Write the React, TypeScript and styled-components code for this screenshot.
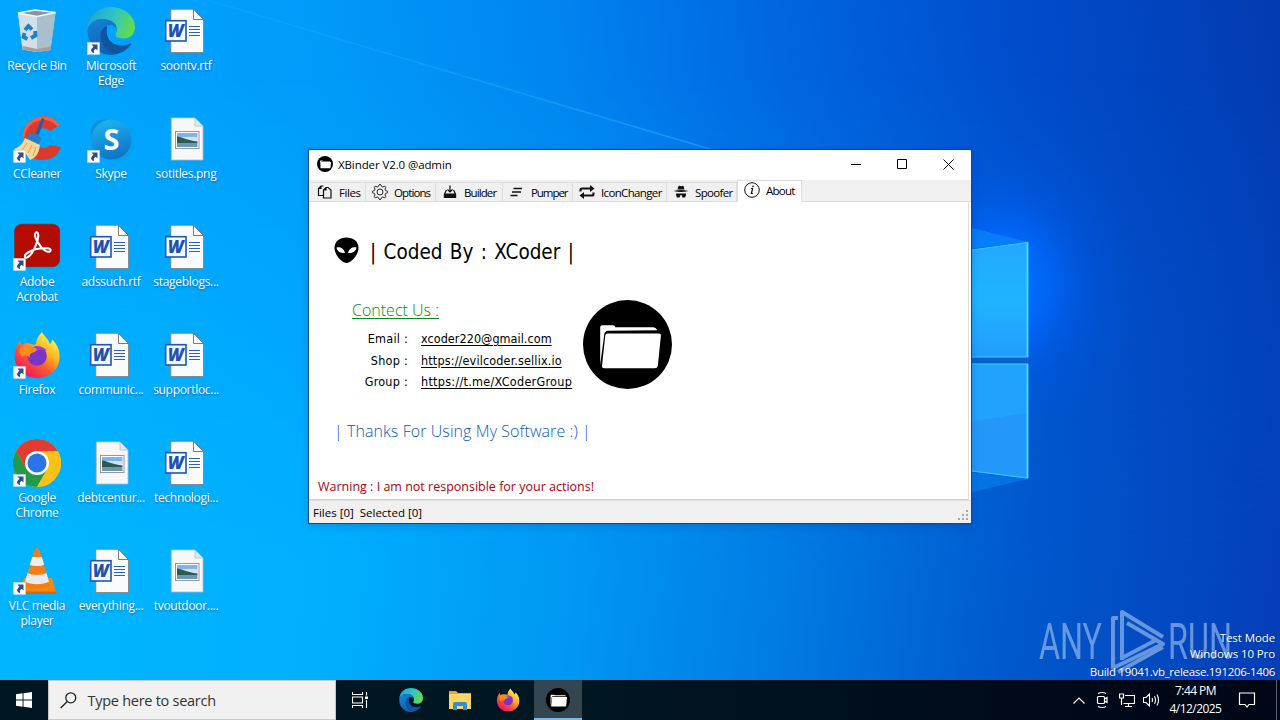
import { ReactElement, ReactNode } from 'react';
import styled, { createGlobalStyle } from 'styled-components';

const GlobalStyle = createGlobalStyle`
  * {
    box-sizing: border-box;
  }

  body {
    margin: 0;
    overflow: hidden;
  }
`;

const ui = "'Open Sans', 'Noto Sans', sans-serif";
const tahoma = "'DejaVu Sans Condensed', 'DejaVu Sans', sans-serif";

const Screen = styled.div`
  position: relative;
  display: flex;
  flex-direction: column;
  width: 1280px;
  height: 720px;
  overflow: hidden;
  font-family: ${ui};
  font-size: 12px;

  svg {
    display: block;
    flex: none;
  }
`;

const WallpaperSvg = styled.svg`
  position: absolute;
  inset: 0;
`;

const Desktop = styled.main`
  position: relative;
  flex: 1;
`;

const IconGrid = styled.div`
  display: grid;
  grid-template-columns: 74px 74px 76px;
  grid-auto-rows: 108px;
  width: 224px;
`;

const Shortcut = styled.div`
  display: flex;
  flex-direction: column;
  align-items: center;
  padding-top: 7px;
`;

const ShortcutLabel = styled.div`
  margin-top: 3px;
  color: #fff;
  font-size: 12px;
  line-height: 15px;
  text-align: center;
  letter-spacing: -0.3px;
  white-space: pre;
  text-shadow: 0 1px 2px rgba(0, 40, 90, 0.5);
`;

const Window = styled.section`
  position: absolute;
  left: 308px;
  top: 149px;
  display: flex;
  flex-direction: column;
  width: 664px;
  height: 375px;
  border: 1px solid #0c4a80;
  background: #fff;
  box-shadow: 0 2px 8px rgba(0, 30, 90, 0.2);
`;

const TitleBar = styled.header`
  display: flex;
  align-items: center;
  height: 30px;
  padding: 0 0 2px 8px;
`;

const WindowTitle = styled.span`
  flex: 1;
  margin-left: 5px;
  font-size: 11.5px;
  letter-spacing: -0.1px;
`;

const WindowButton = styled.div`
  display: flex;
  align-items: center;
  justify-content: center;
  width: 46px;
  height: 28px;
`;

const TabStrip = styled.nav`
  display: flex;
  align-items: flex-end;
  height: 22px;
  padding-left: 2px;
  background: #f0f0f0;
  box-shadow: inset 0 -1px #dcdcdc;
`;

const Tab = styled.div<{ $width: number; $active?: boolean }>`
  display: flex;
  align-items: center;
  gap: 6px;
  width: ${({ $width }) => $width}px;
  height: ${({ $active }) => ($active ? 22 : 20)}px;
  padding: ${({ $active }) => ($active ? '0 0 2px 6px' : '0 0 0 6px')};
  border: 1px solid #dcdcdc;
  border-left-width: ${({ $active }) => ($active ? 1 : 0)}px;
  border-bottom-color: ${({ $active }) => ($active ? '#fff' : '#dcdcdc')};
  background: ${({ $active }) => ($active ? '#fff' : '#f0f0f0')};
  font-size: 11.5px;
  white-space: nowrap;
`;

const TabText = styled.span<{ $spacing: number }>`
  letter-spacing: ${({ $spacing }) => $spacing}px;
`;

const Panel = styled.div`
  display: flex;
  flex-direction: column;
  flex: 1;
  margin-right: 2px;
  border-right: 1px solid #dcdcdc;
  border-bottom: 1px solid #d2d2d2;
`;

const Heading = styled.div`
  display: flex;
  align-items: center;
  gap: 11px;
  height: 28px;
  margin: 34px 0 0 25px;
`;

const HeadingText = styled.h1`
  margin: 3px 0 0;
  font-family: ${tahoma};
  font-size: 20.5px;
  font-weight: 400;
  font-stretch: condensed;
  word-spacing: 1.5px;
`;

const ContactRow = styled.div`
  display: flex;
  height: 92px;
  margin-top: 35px;
`;

const Contact = styled.div`
  width: 274px;
`;

const ContactTitle = styled.div`
  height: 28px;
  padding-left: 43px;
  color: #0a8a14;
  font-size: 16px;
  font-weight: 300;
  line-height: 22px;
  text-decoration: underline;
  text-underline-offset: 2px;
  white-space: nowrap;
`;

const ContactLine = styled.div<{ $spacing: number }>`
  display: grid;
  grid-template-columns: 99px 1fr;
  column-gap: 13px;
  height: 21.6px;
  font-family: ${tahoma};
  font-size: 12.5px;
  font-stretch: condensed;
  line-height: 24px;
  letter-spacing: ${({ $spacing }) => $spacing}px;
  white-space: nowrap;
`;

const ContactLabel = styled.span`
  text-align: right;
  letter-spacing: 0.25px;
`;

const ContactLink = styled.span`
  text-decoration: underline;
  text-underline-offset: 2px;
`;

const BadgeSlot = styled.div`
  padding-top: 1px;
`;

const Thanks = styled.div`
  margin: 28px 0 0 25px;
  color: #0a5cb0;
  font-size: 16px;
  font-weight: 300;
  line-height: 24px;
  letter-spacing: 0.08px;
`;

const Warning = styled.div`
  margin: 34px 0 0 9px;
  color: #b0000c;
  font-size: 12.5px;
  line-height: 20px;
`;

const StatusBar = styled.footer`
  display: flex;
  align-items: center;
  justify-content: space-between;
  height: 23px;
  padding: 0 1px 0 4px;
  border-top: 1px solid #dedede;
  background: #f0f0f0;
  font-size: 11.5px;
  white-space: pre;
`;

const Grip = styled.svg`
  margin-top: 4px;
`;

const Watermark = styled.div`
  position: absolute;
  right: 5px;
  bottom: 0;
  color: #fff;
  font-size: 11.5px;
  text-align: right;
  text-shadow: 0 0 2px rgba(0, 20, 60, 0.5);
`;

const WatermarkLine = styled.div<{ $height: number; $spacing: number }>`
  height: ${({ $height }) => $height}px;
  line-height: 16px;
  letter-spacing: ${({ $spacing }) => $spacing}px;
`;

const WatermarkLogo = styled.svg`
  position: absolute;
  left: 1036px;
  top: 606px;
`;

const Taskbar = styled.footer`
  position: relative;
  display: flex;
  align-items: center;
  height: 40px;
  background: linear-gradient(90deg, #001620 0%, #001722 45%, #000a18 80%, #010716 100%);
`;

const TaskButton = styled.div<{ $width: number; $active?: boolean }>`
  display: flex;
  align-items: center;
  justify-content: center;
  width: ${({ $width }) => $width}px;
  height: 40px;
  background: ${({ $active }) => ($active ? '#33454f' : 'transparent')};
  box-shadow: ${({ $active }) => ($active ? 'inset 0 -2px #76b9ed' : 'none')};
`;

const SearchBox = styled.div`
  display: flex;
  align-items: center;
  gap: 10.5px;
  width: 288px;
  height: 40px;
  padding-left: 11px;
  border: 1px solid #c4c8ca;
  background: #f1f1f1;
  color: #333;
  font-size: 14.5px;
`;

const SearchText = styled.span`
  letter-spacing: -0.27px;
`;

const Tray = styled.div`
  display: flex;
  align-items: center;
  gap: 8px;
  margin-left: auto;
  height: 40px;
`;

const Clock = styled.div`
  width: 55px;
  color: #fff;
  font-size: 12px;
  line-height: 18px;
  text-align: center;
  letter-spacing: -0.55px;
  white-space: nowrap;
`;

const ShowDesktop = styled.div`
  width: 4px;
  height: 40px;
  margin-left: 9px;
  border-left: 1px solid #59616c;
`;

const Wallpaper = (): ReactElement => (
  <WallpaperSvg width="1280" height="720" viewBox="0 0 1280 720">
    <defs>
      <linearGradient id="sky" gradientUnits="userSpaceOnUse" x1="0" y1="200" x2="1270" y2="20">
        <stop offset="0" stopColor="#00a8fe" />
        <stop offset="0.25" stopColor="#009cfa" />
        <stop offset="0.45" stopColor="#0084f0" />
        <stop offset="0.62" stopColor="#0066e2" />
        <stop offset="0.8" stopColor="#004dcc" />
        <stop offset="1" stopColor="#033cb2" />
      </linearGradient>
      <linearGradient id="ground" gradientUnits="userSpaceOnUse" x1="0" y1="500" x2="1270" y2="680">
        <stop offset="0" stopColor="#00b6ff" />
        <stop offset="0.25" stopColor="#00b0ff" />
        <stop offset="0.45" stopColor="#0098f2" />
        <stop offset="0.62" stopColor="#007be2" />
        <stop offset="0.8" stopColor="#0058cc" />
        <stop offset="1" stopColor="#043eb8" />
      </linearGradient>
      <linearGradient id="fadeDown" x1="0" y1="0" x2="0" y2="1">
        <stop offset="0.1" stopColor="#000" />
        <stop offset="0.8" stopColor="#fff" />
      </linearGradient>
      <mask id="lower">
        <rect width="1280" height="720" fill="url(#fadeDown)" />
      </mask>
      <radialGradient id="glow" gradientUnits="userSpaceOnUse" cx="0" cy="0" r="1" gradientTransform="translate(1005 285) scale(140 165)">
        <stop offset="0" stopColor="#0078ff" stopOpacity="1" />
        <stop offset="0.3" stopColor="#006aff" stopOpacity="0.8" />
        <stop offset="0.6" stopColor="#005cf0" stopOpacity="0.3" />
        <stop offset="1" stopColor="#0052dc" stopOpacity="0" />
      </radialGradient>
      <linearGradient id="ray" gradientUnits="userSpaceOnUse" x1="200" y1="0" x2="708" y2="149">
        <stop offset="0" stopColor="#3cc4ff" stopOpacity="0.1" />
        <stop offset="1" stopColor="#30b4ff" stopOpacity="0.5" />
      </linearGradient>
      <linearGradient id="paneTop" x1="0" y1="0" x2="0" y2="1">
        <stop offset="0" stopColor="#24a8ff" />
        <stop offset="0.5" stopColor="#1fb4ff" />
        <stop offset="1" stopColor="#249cff" />
      </linearGradient>
    </defs>
    <rect width="1280" height="720" fill="url(#sky)" />
    <rect width="1280" height="720" fill="url(#ground)" mask="url(#lower)" />
    <path d="M180 -8 L708 149 H308 L0 60 V0 Z" fill="#08b0ff" opacity="0.06" />
    <path d="M180 -8 L720 152" stroke="url(#ray)" strokeWidth="1.5" fill="none" />
    <rect x="780" y="80" width="420" height="440" fill="url(#glow)" />
    <path d="M960 225 L1028 242 L960 250 Z" fill="#0a8cff" opacity="0.6" />
    <path d="M960 495 L1028 479 L960 471 Z" fill="#0a8cff" opacity="0.45" />
    <path d="M960 251.500 L1028 242 V357.500 H960 Z" fill="url(#paneTop)" />
    <path d="M960 363.500 H1028 V478.500 L960 470 Z" fill="#2398fa" />
    <path d="M960 363.500 H1028 V413 L960 423 Z" fill="#22a2ff" />
    <path d="M960 357.500 H1028 V363.500 H960 Z" fill="#0461d2" />
    <path d="M960 251.500 L1027.500 242.500 V357 H960 M960 364 H1027.500 V478 L960 469.500" fill="none" stroke="#38c4ff" strokeWidth="1.200" />
    <path d="M1027.500 242.500 V357 M1027.500 364 V478" stroke="#48dcff" strokeWidth="1.800" />
  </WallpaperSvg>
);

const ArrowBadge = (): ReactElement => (
  <g>
    <rect x="0.500" y="35.500" width="12" height="12" fill="#fff" stroke="#c9d6df" strokeWidth="0.600" />
    <path d="M4.500 37.500 H10.500 V43.500 L8.700 41.800 C6.800 43 6.500 44 7.200 46 C3.300 45.200 3 42.200 6.500 39.700 Z" fill="#2b4f8e" />
  </g>
);

const Glyph = ({ size = 48, children }: { size?: number; children: ReactNode }): ReactElement => (
  <svg width={size} height={size} viewBox="0 0 48 48">
    {children}
  </svg>
);

const RecycleBin = (): ReactElement => (
  <Glyph>
    <path d="M5 6 L22 2.500 L42.500 5.500 L37.500 43 L24 45 L9.500 42.500 Z" fill="#b9cbd6" />
    <path d="M5 6 L24 9.500 L24 45 L9.500 42.500 Z" fill="#d3dfe6" />
    <path d="M24 9.500 L42.500 5.500 L37.500 43 L24 45 Z" fill="#a9bfcc" />
    <path d="M5 6 L22 3 L42.500 5.500 L24 9.500 Z" fill="#8397a1" stroke="#f2f6f8" strokeWidth="1.300" />
    <path d="M9.500 39 L24 42 L38 39.500 L37.500 43 L24 45 L9.500 42.500 Z" fill="#a99b98" />
    <g fill="none" stroke="#1c7fd0" strokeWidth="3.800">
      <path d="M12 23 L15.500 19 L19 22.500" />
      <path d="M22 24 L22.500 28.500 L18 31" />
      <path d="M14.500 32 L10.500 30 L11.500 26" />
    </g>
  </Glyph>
);

const EdgeShape = (): ReactElement => (
  <g>
    <defs>
      <linearGradient id="edgeGreen" x1="0" y1="0.300" x2="1" y2="0.600">
        <stop offset="0" stopColor="#1fa3dc" />
        <stop offset="0.5" stopColor="#2fc4c2" />
        <stop offset="1" stopColor="#66dd46" />
      </linearGradient>
      <linearGradient id="edgeBlue" x1="0" y1="0" x2="0.400" y2="1">
        <stop offset="0" stopColor="#1784d6" />
        <stop offset="1" stopColor="#0d62b4" />
      </linearGradient>
    </defs>
    <path d="M0.500 22 C1 9 11 0 24 0 C37 0 48 9 48 20 C48 27 43 31.500 37 31.500 C32 31.500 28.500 30 28.500 28 C28.500 26 30 26 30 22.500 C30 16 23 12 15.500 12 C8 12 3 16 0.500 22 Z" fill="url(#edgeGreen)" />
    <path d="M0.500 22 C3 15 9 11.800 15.500 12 C23 12 30 16 30 22.500 C29 19.500 26 18 23 18 C16 18 12 26 14.500 34 C17 42 24 46 30 47 C28 47.700 26 48 24 48 C10.500 48 -0.500 36 0.500 22 Z" fill="url(#edgeBlue)" />
    <path d="M20 19 C12 23 13 35 20 41 C26 46 36 45.500 43 37.500 C38 40 32 39.500 27 37 C20 33.500 18 26 20 19 Z" fill="#10408e" />
    <path d="M14.300 34 C17 42 24 47 30 47 C36 45.500 41 42 44 37.500 C45 35.500 43 36.500 42 37 C31 41.500 17 36 20 19 C14 21 12 28 14.300 34 Z" fill="#11549f" />
  </g>
);

const WordDoc = (): ReactElement => (
  <Glyph>
    <path d="M8.800 2.300 H31.500 L41.500 12.500 V45.500 H8.800 Z" fill="#f9fbfd" stroke="#817a78" strokeWidth="0.800" />
    <path d="M31.500 2.300 V12.500 H41.500 Z" fill="#fff" stroke="#6d6c70" strokeWidth="0.900" />
    <path d="M27 19.500 H38 M27 22.500 H38 M27 25.500 H38 M27 28.500 H38" stroke="#2a64b4" strokeWidth="1" />
    <rect x="3.700" y="13.700" width="20.300" height="20.300" fill="#f7faff" stroke="#1d56b5" strokeWidth="1.600" />
    <text x="13.800" y="30" textAnchor="middle" fontFamily="Open Sans" fontSize="17" fontWeight="800" fontStyle="italic" fill="#1d52b0">
      W
    </text>
  </Glyph>
);

const ImageDoc = (): ReactElement => (
  <Glyph>
    <path d="M9.300 2.900 H33 L41 11 V45 H9.300 Z" fill="#f7f7f7" stroke="#b3b9bd" strokeWidth="0.800" />
    <path d="M33 2.900 V11 H41 Z" fill="#dfe9f0" stroke="#b3b9bd" strokeWidth="0.700" />
    <rect x="13.500" y="16.500" width="23.500" height="17" fill="#fff" stroke="#8d9ba8" />
    <rect x="15" y="18" width="20.500" height="7" fill="#7fb4e6" />
    <rect x="15" y="22" width="20.500" height="5" fill="#cfe3f2" />
    <path d="M15 21.500 C20 22 25 25.500 35.500 26.500 V28 H15 Z" fill="#2f5a54" />
    <rect x="15" y="28" width="20.500" height="4" fill="#6f98ae" />
  </Glyph>
);

const CCleaner = (): ReactElement => (
  <Glyph>
    <path d="M47 10 C41 2 32 -1 23 3 C13 7 9 15 10 25 C11 38 19 46 30 45 C39 45 45 40 48 32 L37 30 C34 34 28 34 25 30 C22 25 22 19 26 15 C30 12 34 13 37 16 Z" fill="#dc3b2b" />
    <path d="M23 3 C32 -1 41 2 47 10 L44.500 11.500 C38 4 29 3.500 22 7 C14 11 11 18 11.500 27 L10 25 C9 15 13 7 23 3 Z" fill="#f2604a" />
    <path d="M28.500 4 C29.500 2.500 31.500 3 31 5 L25 22 L21.500 20.500 Z" fill="#1d5fa8" />
    <path d="M16 19 C19 16 26 19 28 24 L25 31 L12 25 Z" fill="#2b7cc4" />
    <path d="M12 23 L27 30 C26 38 23 43 17 45 L13 39 L11 43 L1 34 C7 32 10 28 12 23 Z" fill="#f7d594" />
    <path d="M14 28 L9 35 M19 30 L15 38 M23 32 L20 41" stroke="#dba75a" strokeWidth="1" />
    <ArrowBadge />
  </Glyph>
);

const Skype = (): ReactElement => (
  <Glyph>
    <defs>
      <linearGradient id="skype" x1="0.300" y1="0" x2="0.600" y2="1">
        <stop offset="0" stopColor="#1fb4ea" />
        <stop offset="1" stopColor="#0d72ca" />
      </linearGradient>
    </defs>
    <circle cx="17" cy="18" r="13.500" fill="#138fd8" />
    <circle cx="32" cy="31" r="14" fill="#0aa0e4" />
    <circle cx="24.500" cy="24.500" r="20" fill="url(#skype)" />
    <text x="24.500" y="34.500" textAnchor="middle" fontFamily="Open Sans" fontSize="29" fontWeight="700" fill="#fff">
      S
    </text>
    <ArrowBadge />
  </Glyph>
);

const Acrobat = (): ReactElement => (
  <Glyph>
    <rect x="1.700" y="1.200" width="45" height="42.500" rx="7" fill="#b30b00" stroke="#7d2822" strokeWidth="0.700" />
    <path d="M23 9.500 C25.500 8.500 26 13 24 19 C21.500 26.500 17.500 33 14 34.500 C11 35.500 11 32 15 29.500 C20 26.500 28 25 34 25.300 C39 25.700 38.500 29 35 28.700 C31 28.500 26 22 23.500 17 C21.500 13 21.500 10.500 23 9.500 Z" fill="none" stroke="#fff" strokeWidth="2.100" />
    <ArrowBadge />
  </Glyph>
);

const FirefoxShape = (): ReactElement => (
  <g>
    <defs>
      <linearGradient id="foxBody" x1="0.850" y1="0.100" x2="0.200" y2="0.950">
        <stop offset="0.05" stopColor="#fff04a" />
        <stop offset="0.35" stopColor="#ffb020" />
        <stop offset="0.6" stopColor="#ff5a30" />
        <stop offset="1" stopColor="#ee1068" />
      </linearGradient>
    </defs>
    <path d="M29 1 C31 5 35 7.500 37 13 C38.500 11.500 39 10 39 8.500 C44 13 47 19 46.500 27 C46 39 36 47 24.500 47 C12 47 2 38 1.700 25.500 C1.500 19 4 14 7 9.500 C7.300 11.500 8 13 9 14 C11 12.500 13 12 16 12.500 C18.500 13 20 14 23 13.500 C23 8.500 26 4 29 1 Z" fill="url(#foxBody)" />
    <circle cx="24" cy="25" r="9.800" fill="#7a35c8" />
    <path d="M16 19 C20 14 30 14 34 20 C30 18.500 26 18 23 20.500 C20 22 17 21 16 19 Z" fill="#a33ad6" />
    <path d="M7 17 C12 13 18 16 22.500 17 C25 18 23 21 20 21.500 C17 22.500 16 24 17 26.500 C13 24 11 24 9 26 C7 24 6 21 7 17 Z" fill="#ff8a20" />
  </g>
);

const Chrome = (): ReactElement => (
  <Glyph>
    <circle cx="24" cy="24" r="24" fill="#fbc116" />
    <path d="M3.200 12 A24 24 0 0 0 24 48 L34.400 30 L24 24 L13.600 30 Z" fill="#24994a" />
    <path d="M24 12 H44.800 A24 24 0 0 1 24 48 L34.400 30 Z" fill="#fbc116" />
    <path d="M3.200 12 A24 24 0 0 1 44.800 12 H24 L13.600 30 Z" fill="#e33b2e" />
    <circle cx="24" cy="24" r="12" fill="#fff" />
    <circle cx="24" cy="24" r="9.500" fill="#2a74e8" />
    <ArrowBadge />
  </Glyph>
);

const Vlc = (): ReactElement => (
  <Glyph>
    <path d="M11 31 H39 L43.500 46.500 H6 Z" fill="#f28a10" />
    <path d="M6 44.500 H43.500 V47 H6 Z" fill="#d9660a" />
    <path d="M21.500 3 C22 0.800 26 0.800 26.500 3 L37 38 C35 43 13 43 11 38 Z" fill="#f47e14" />
    <path d="M19.200 10 H28.800 L31.200 17.500 C28 19.500 20 19.500 16.800 17.500 Z" fill="#eceff0" />
    <path d="M14.500 26 C19 28.500 29 28.500 33.500 26 L36 34.500 C31 38 17 38 12 34.500 Z" fill="#e8ebec" />
    <ArrowBadge />
  </Glyph>
);

const FolderBadge = ({ size }: { size: number }): ReactElement => (
  <svg width={size} height={size} viewBox="0 0 88 88">
    <circle cx="44" cy="44" r="44" fill="#000" />
    <path d="M17 64 V27 Q17 25 19 25 H30 Q31.500 25 32 27 H69 Q72 27 73.500 30 L25 30.500 Q21.500 30.500 21 34 Z" fill="#fff" />
    <path d="M24 33 H75 Q77.500 33 77 35.500 L74 65 Q73.600 67.500 71 67.500 H21 Q18.500 67.500 18.800 65 L22 35 Q22.300 33 24 33 Z" fill="#fff" />
  </svg>
);

const shortcuts: { icon: ReactElement; label: string }[] = [
  { icon: <RecycleBin />, label: 'Recycle Bin' },
  { icon: <Glyph><EdgeShape /><ArrowBadge /></Glyph>, label: 'Microsoft\nEdge' },
  { icon: <WordDoc />, label: 'soontv.rtf' },
  { icon: <CCleaner />, label: 'CCleaner' },
  { icon: <Skype />, label: 'Skype' },
  { icon: <ImageDoc />, label: 'sotitles.png' },
  { icon: <Acrobat />, label: 'Adobe\nAcrobat' },
  { icon: <WordDoc />, label: 'adssuch.rtf' },
  { icon: <WordDoc />, label: 'stageblogs...' },
  { icon: <Glyph><FirefoxShape /><ArrowBadge /></Glyph>, label: 'Firefox' },
  { icon: <WordDoc />, label: 'communic...' },
  { icon: <WordDoc />, label: 'supportloc...' },
  { icon: <Chrome />, label: 'Google\nChrome' },
  { icon: <ImageDoc />, label: 'debtcentur...' },
  { icon: <WordDoc />, label: 'technologi...' },
  { icon: <Vlc />, label: 'VLC media\nplayer' },
  { icon: <WordDoc />, label: 'everything...' },
  { icon: <ImageDoc />, label: 'tvoutdoor....' },
];

const TabIcon = ({ children }: { children: ReactNode }): ReactElement => (
  <svg width="16" height="16" viewBox="0 0 16 16" fill="none" stroke="#111" strokeWidth="1.2">
    {children}
  </svg>
);

const gearPath = Array.from({ length: 32 }, (_, i) => {
  const radius = i % 4 < 2 ? 7.5 : 5.7;
  const angle = ((i - 0.5) * Math.PI) / 16;
  const x = (8 + radius * Math.cos(angle)).toFixed(2);
  const y = (8 + radius * Math.sin(angle)).toFixed(2);
  return `${i ? 'L' : 'M'}${x} ${y}`;
}).join(' ');

const tabs: { label: string; width: number; spacing: number; icon: ReactNode }[] = [
  {
    label: 'Files',
    width: 55,
    spacing: -0.45,
    icon: (
      <>
        <path d="M6.500 11.500 H1.500 V4.500 L4 2 H6.500 M4 2 V4.500 H1.500" />
        <path d="M6.500 14 V6 L9 3.500 H11 L14 6 V14 Z M9 3.500 V6 H6.500" />
      </>
    ),
  },
  {
    label: 'Options',
    width: 70,
    spacing: -0.9,
    icon: (
      <>
        <path d={`${gearPath} Z`} strokeWidth="0.900" />
        <circle cx="8" cy="8" r="3" strokeWidth="0.900" />
      </>
    ),
  },
  {
    label: 'Builder',
    width: 67,
    spacing: -0.9,
    icon: (
      <>
        <path d="M4.500 6 L2.500 10 V13.500 H13.500 V10 L11.500 6 M2.500 10 H13.500" />
        <path d="M2.500 10.500 H13.500 V13.500 H2.500 Z" fill="#111" />
        <path d="M8 1.500 V8 M5.500 5.500 L8 8 L10.500 5.500" />
      </>
    ),
  },
  {
    label: 'Pumper',
    width: 70,
    spacing: -1.05,
    icon: <path d="M4.500 4.500 H13 M3 8 H12 M1.500 11.500 H8.500" strokeWidth="1.300" />,
  },
  {
    label: 'IconChanger',
    width: 94,
    spacing: -0.65,
    icon: (
      <>
        <path d="M1.500 7.500 V6 Q1.500 4.500 3 4.500 H12 M14.500 8.500 V10 Q14.500 11.500 13 11.500 H4" strokeWidth="2.100" />
        <path d="M11 1 L15.500 4.500 L11 8 Z M5 8 L0.500 11.500 L5 15 Z" fill="#111" stroke="none" />
      </>
    ),
  },
  {
    label: 'Spoofer',
    width: 70,
    spacing: -0.65,
    icon: (
      <g fill="#111" stroke="none">
        <path d="M4.500 5.500 L5.500 2 Q6.500 1.500 8 2.200 Q9.500 1.500 10.500 2 L11.500 5.500 Z" />
        <path d="M0.500 7 Q8 4.800 15.500 7 Q8 9.200 0.500 7 Z" />
        <path d="M3 9.500 H13 V11 L12 13.500 H9.500 L8.500 11 H7.500 L6.500 13.500 H4 L3 11 Z" />
      </g>
    ),
  },
];

const contacts = [
  { label: 'Email :', value: 'xcoder220@gmail.com', spacing: 0.05 },
  { label: 'Shop :', value: 'https://evilcoder.sellix.io', spacing: 0.15 },
  { label: 'Group :', value: 'https://t.me/XCoderGroup', spacing: 0.28 },
];

const BinderWindow = (): ReactElement => (
  <Window>
    <TitleBar>
      <FolderBadge size={16} />
      <WindowTitle>XBinder V2.0 @admin</WindowTitle>
      <WindowButton>
        <svg width="10" height="10"><path d="M0 5.500 H10" stroke="#000" /></svg>
      </WindowButton>
      <WindowButton>
        <svg width="10" height="10"><path d="M0.500 0.500 H9.500 V9.500 H0.500 Z" stroke="#000" fill="none" /></svg>
      </WindowButton>
      <WindowButton>
        <svg width="11" height="11"><path d="M0.500 0.500 L10.500 10.500 M10.500 0.500 L0.500 10.500" stroke="#000" /></svg>
      </WindowButton>
    </TitleBar>
    <TabStrip>
      {tabs.map(({ label, width, spacing, icon }) => (
        <Tab key={label} $width={width}>
          <TabIcon>{icon}</TabIcon>
          <TabText $spacing={spacing}>{label}</TabText>
        </Tab>
      ))}
      <Tab $width={65} $active>
        <TabIcon>
          <circle cx="8" cy="8" r="7.300" strokeWidth="1" />
          <path d="M7 6.500 H8.600 L7.400 11.500 H9" strokeWidth="1.200" />
          <circle cx="9" cy="4.300" r="0.900" fill="#111" stroke="none" />
        </TabIcon>
        <TabText $spacing={-0.75}>About</TabText>
      </Tab>
    </TabStrip>
    <Panel>
      <Heading>
        <svg width="25" height="27" viewBox="0 0 25 27">
          <path d="M12.500 0.500 C19 0.500 24.500 4 24.500 11 C24.500 18 17 26 12.500 26 C8 26 0.500 18 0.500 11 C0.500 4 6 0.500 12.500 0.500 Z" fill="#000" />
          <path d="M2.500 10.500 C6 9.500 10 11.500 11 16 C7 16.500 3 14.500 2.500 10.500 Z M22.500 10.500 C19 9.500 15 11.500 14 16 C18 16.500 22 14.500 22.500 10.500 Z" fill="#fff" />
        </svg>
        <HeadingText>| Coded By : XCoder |</HeadingText>
      </Heading>
      <ContactRow>
        <Contact>
          <ContactTitle>Contect Us :</ContactTitle>
          {contacts.map(({ label, value, spacing }) => (
            <ContactLine key={label} $spacing={spacing}>
              <ContactLabel>{label}</ContactLabel>
              <ContactLink>{value}</ContactLink>
            </ContactLine>
          ))}
        </Contact>
        <BadgeSlot>
          <FolderBadge size={89} />
        </BadgeSlot>
      </ContactRow>
      <Thanks>| Thanks For Using My Software :) |</Thanks>
      <Warning>Warning : I am not responsible for your actions!</Warning>
    </Panel>
    <StatusBar>
      <span>Files [0]  Selected [0]</span>
      <Grip width="12" height="14" fill="#a8a8a8">
        <path d="M8 3h2v2h-2z M8 7h2v2h-2z M8 11h2v2h-2z M4 7h2v2h-2z M4 11h2v2h-2z M0 11h2v2h-2z" />
      </Grip>
    </StatusBar>
  </Window>
);

const AnyRunLogo = (): ReactElement => (
  <WatermarkLogo width="200" height="70" viewBox="0 0 200 70">
    <g fill="#a4c4f0" opacity="0.62">
      <text x="3" y="53" fontFamily="Roboto" fontSize="50" fontWeight="400" textLength="63" lengthAdjust="spacingAndGlyphs">
        ANY
      </text>
      <text x="132" y="53" fontFamily="Roboto" fontSize="50" fontWeight="400" textLength="64" lengthAdjust="spacingAndGlyphs">
        RUN
      </text>
    </g>
    <g fill="none" stroke="#a4c4f0" strokeWidth="4" opacity="0.62" strokeLinejoin="round">
      <path d="M86 54 V6 L127 31" />
      <path d="M82 12 H77 V62 L127 38 L91 17" />
      <path d="M86 52 L120 34" />
      <path d="M82 66 L127 41" />
    </g>
  </WatermarkLogo>
);

const App = (): ReactElement => {
  return (
    <Screen>
      <GlobalStyle />
      <Wallpaper />
      <Desktop>
        <IconGrid>
          {shortcuts.map(({ icon, label }) => (
            <Shortcut key={label}>
              {icon}
              <ShortcutLabel>{label}</ShortcutLabel>
            </Shortcut>
          ))}
        </IconGrid>
        <BinderWindow />
        <AnyRunLogo />
        <Watermark>
          <WatermarkLine $height={16} $spacing={-0.1}>Test Mode</WatermarkLine>
          <WatermarkLine $height={18} $spacing={-0.1}>Windows 10 Pro</WatermarkLine>
          <WatermarkLine $height={16} $spacing={-0.3}>Build 19041.vb_release.191206-1406</WatermarkLine>
        </Watermark>
      </Desktop>
      <Taskbar>
        <TaskButton $width={48}>
          <svg width="16" height="16" fill="#fff">
            <path d="M0 2.300 L6.600 1.300 V7.500 H0 Z M7.500 1.200 L16 0 V7.500 H7.500 Z M0 8.400 H6.600 V14.700 L0 13.700 Z M7.500 8.400 H16 V16 L7.500 14.800 Z" />
          </svg>
        </TaskButton>
        <SearchBox>
          <svg width="17" height="17" fill="none" stroke="#222" strokeWidth="1.300">
            <circle cx="10.800" cy="5.800" r="5" />
            <path d="M7.200 9.500 L0.700 16" />
          </svg>
          <SearchText>Type here to search</SearchText>
        </SearchBox>
        <TaskButton $width={48}>
          <svg width="17" height="16" fill="none" stroke="#fff" strokeWidth="1.100">
            <path d="M0.500 0 V2.500 H10.500 V0 M0.500 5 H10.500 V11 H0.500 Z M0.500 16 V13.500 H10.500 V16 M14.500 0 V3.500 M14.500 8 V16" />
            <path d="M13 4.500 H16 V7 H13 Z" fill="#fff" stroke="none" />
          </svg>
        </TaskButton>
        <TaskButton $width={54}>
          <Glyph size={24}><EdgeShape /></Glyph>
        </TaskButton>
        <TaskButton $width={43}>
          <svg width="22" height="20" viewBox="0 0 22 20">
            <path d="M0 1 H7 L9 3 H22 V19 H0 Z" fill="#e9a820" />
            <path d="M0 4 H22 V19 H0 Z" fill="#ffd563" />
            <path d="M4 20 V14 Q4 12 6 12 H16 Q18 12 18 14 V20 H14 V16 H8 V20 Z" fill="#2f8fd4" />
          </svg>
        </TaskButton>
        <TaskButton $width={53}>
          <Glyph size={24}><FirefoxShape /></Glyph>
        </TaskButton>
        <TaskButton $width={48} $active>
          <FolderBadge size={24} />
        </TaskButton>
        <Tray>
          <svg width="12" height="7" fill="none" stroke="#fff" strokeWidth="1.200"><path d="M0.500 6.500 L6 1 L11.500 6.500" /></svg>
          <svg width="18" height="18" fill="none" stroke="#fff" strokeWidth="1.200">
            <rect x="4.500" y="5.500" width="7" height="7" rx="1" />
            <path d="M11.500 8 L14 6.500 V11.500 L11.500 10 M5 2.500 Q9 0.500 13 2.500 M5 15.500 Q9 17.500 13 15.500" />
          </svg>
          <svg width="16" height="15" fill="none" stroke="#fff" strokeWidth="1.200">
            <path d="M6 2.500 H15.500 V10.500 H4.500 M9.500 10.500 V13.500 M6 13.500 H13 M0.500 1 H4.500 V5 H0.500 Z M2.500 5 V12" />
          </svg>
          <svg width="17" height="14" fill="none" stroke="#fff" strokeWidth="1.100">
            <path d="M0.500 4.500 H3 L6.500 1 V13 L3 9.500 H0.500 Z M9 5 Q10 7 9 9 M11.500 3.200 Q13.500 7 11.500 10.800 M14 1.500 Q17 7 14 12.500" />
          </svg>
          <Clock>
            <div>7:44 PM</div>
            <div>4/12/2025</div>
          </Clock>
          <svg width="28" height="17" viewBox="-8 0 28 17" fill="none" stroke="#fff" strokeWidth="1.200">
            <path d="M0.500 1 H15.500 V12.500 H10 L8 15 L6 12.500 H0.500 Z" />
          </svg>
          <ShowDesktop />
        </Tray>
      </Taskbar>
    </Screen>
  );
};

export default App;
